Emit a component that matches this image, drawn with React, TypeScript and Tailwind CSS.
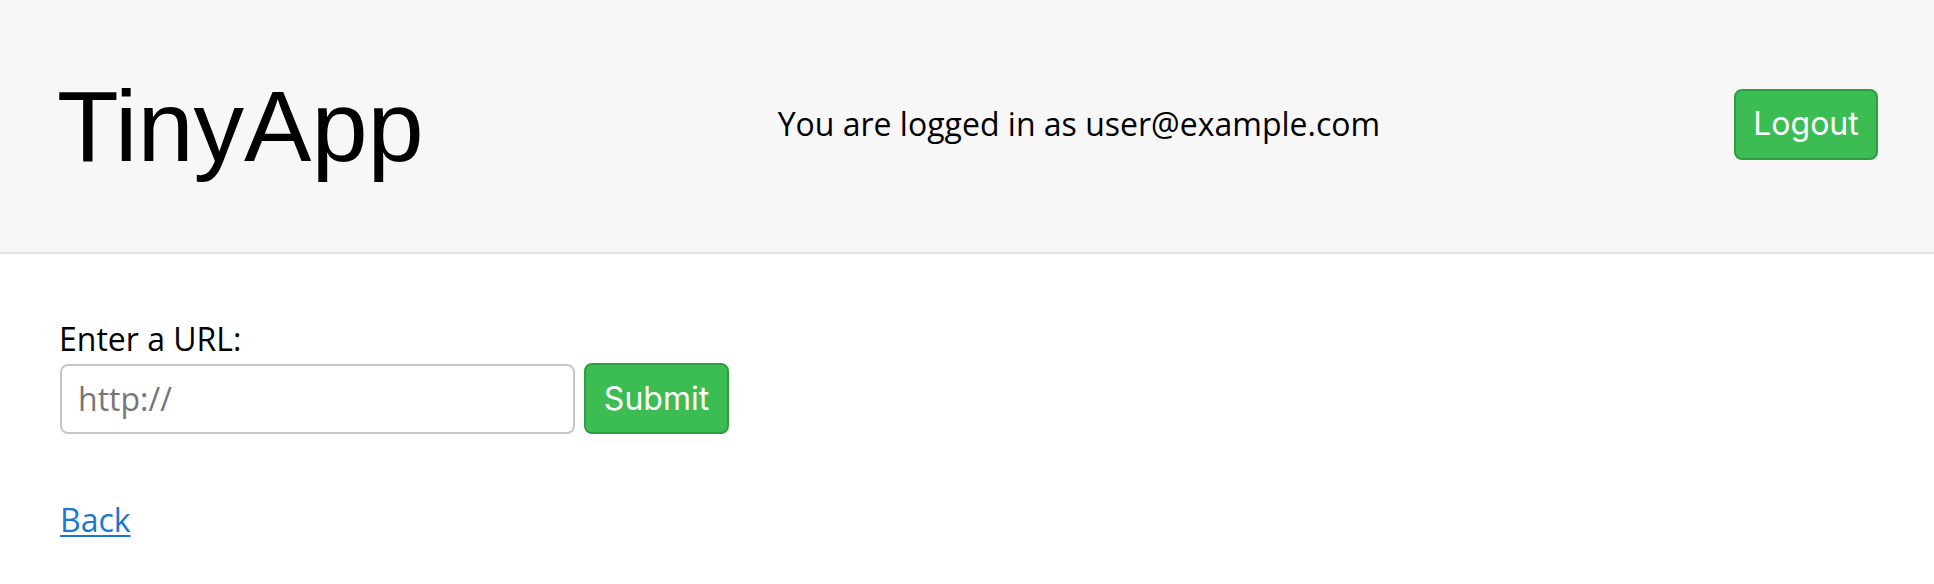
import React from "react";

export default function App() {
  return (
    <div className="min-h-[584px] bg-white text-black" style={{ fontFamily: '"Open Sans", sans-serif' }}>
      <header className="h-[254px] bg-[#f7f7f7] border-b-2 border-[#e2e2e2] flex items-center justify-between pl-[57px] pr-[56px]">
        <h1 className="text-[101px] leading-none font-normal" style={{ fontFamily: '"Liberation Sans", Arial, sans-serif' }}>
          TinyApp
        </h1>
        <div className="text-[32px] leading-[48px] -mt-[5px]">You are logged in as user@example.com</div>
        <button
          className="w-[144px] h-[71px] -mt-[4px] rounded-[8px] bg-[#3bbd53] border-2 border-[#2e9c43] text-white text-[32px] leading-none"
          style={{ fontFamily: 'Inter, Roboto, sans-serif' }}
        >
          Logout
        </button>
      </header>
      <main className="px-[60px] pt-[61px]">
        <form className="flex flex-col" onSubmit={(e) => e.preventDefault()}>
          <label className="text-[32px] leading-[48px] -ml-[1px]">Enter a URL:</label>
          <div className="flex items-center gap-[9px]">
            <input
              type="text"
              placeholder="http://"
              className="w-[515px] h-[70px] rounded-[8px] border-2 border-[#c6c6c6] bg-white px-[16px] text-[32px] placeholder:text-[#767676] outline-none"
              style={{ fontFamily: '"Open Sans", sans-serif' }}
            />
            <button
              type="submit"
              className="w-[145px] h-[71px] rounded-[8px] bg-[#3bbd53] border-2 border-[#2e9c43] text-white text-[32px] leading-none"
              style={{ fontFamily: 'Inter, Roboto, sans-serif' }}
            >
              Submit
            </button>
          </div>
        </form>
        <div className="mt-[62px] text-[32px] leading-[48px]">
          <a href="#" className="text-[#1b78d0] underline decoration-2 underline-offset-[3px]">
            Back
          </a>
        </div>
      </main>
    </div>
  );
}
